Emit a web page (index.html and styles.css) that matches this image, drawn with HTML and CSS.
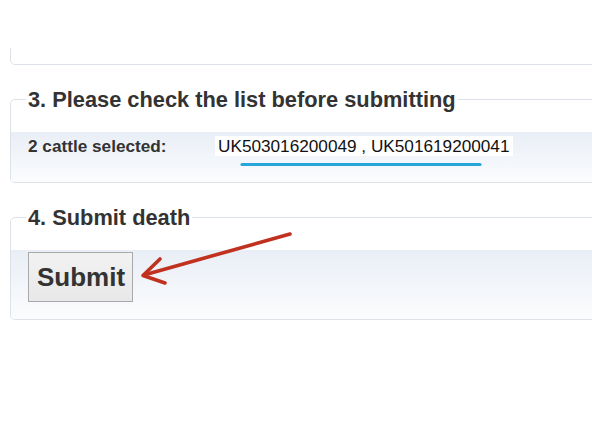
FILE: index.html
```html
<!DOCTYPE html>
<html lang="en">
<head>
<meta charset="utf-8">
<title>Submit death</title>
<link rel="stylesheet" href="styles.css">
</head>
<body>
<div class="page">
  <fieldset class="box box-prev"></fieldset>

  <fieldset class="box">
    <legend class="legend">3. Please check the list before submitting</legend>
    <div class="row row-list">
      <span class="label">2 cattle selected:</span>
      <span class="values">UK503016200049 , UK501619200041</span>
    </div>
  </fieldset>

  <fieldset class="box">
    <legend class="legend">4. Submit death</legend>
    <div class="row row-submit">
      <button class="submit" type="button">Submit</button>
    </div>
  </fieldset>

  <svg class="annot" width="592" height="444" viewBox="0 0 592 444" aria-hidden="true">
    <line x1="242" y1="164.5" x2="480" y2="164.5" stroke="#27a6db" stroke-width="3.2" stroke-linecap="round"/>
    <g stroke="#c0321f" stroke-width="3.6" stroke-linecap="round" stroke-linejoin="round" fill="none">
      <line x1="290" y1="234" x2="144" y2="275"/>
      <polyline points="160,259 143,275.5 165,283"/>
    </g>
  </svg>
</div>
</body>
</html>
```

FILE: styles.css
```css
html, body {
  margin: 0;
  padding: 0;
  background: #ffffff;
  overflow: hidden;
}

.page {
  position: relative;
  width: 592px;
  height: 444px;
  overflow: hidden;
  padding-top: 48px;
  box-sizing: border-box;
  font-family: "Liberation Sans", Arial, sans-serif;
  color: #333333;
}

.box {
  width: 720px;
  margin: 0 0 22px 10px;
  padding: 0;
  border: 1px solid #dde2e8;
  border-radius: 5px;
  box-sizing: border-box;
  min-width: 0;
}

.box-prev {
  height: 17px;
  border-top: none;
  border-radius: 0 0 5px 5px;
}

.legend {
  margin-left: 15px;
  padding: 0 2px;
  font-size: 21.8px;
  font-weight: bold;
  line-height: 25px;
  color: #333333;
}

.row {
  margin-top: 20px;
  background: linear-gradient(to bottom, #e9eef6 0%, #f3f6fa 55%, #fbfcfd 100%);
  border-bottom-left-radius: 4px;
  border-bottom-right-radius: 4px;
}

.row-list {
  display: grid;
  grid-template-columns: 187px auto;
  justify-content: start;
  align-items: start;
  padding: 4px 17px 26px;
  height: 50px;
  box-sizing: border-box;
  font-size: 17.2px;
  line-height: 20px;
}

.label {
  font-weight: bold;
  color: #333333;
}

.values {
  justify-self: start;
  padding: 0 3px;
  background: #ffffff;
  color: #111111;
}

.row-submit {
  display: flex;
  padding: 2px 17px 17px;
}

.submit {
  margin: 0;
  width: 105px;
  height: 50px;
  padding: 0 8px;
  font-family: "Liberation Sans", Arial, sans-serif;
  font-size: 26px;
  font-weight: bold;
  color: #333333;
  background: linear-gradient(to bottom, #f2f2f2, #e8e8e8);
  border: 1px solid #a9a9a9;
  border-radius: 0;
}

.annot {
  position: absolute;
  left: 0;
  top: 0;
  pointer-events: none;
}
```
